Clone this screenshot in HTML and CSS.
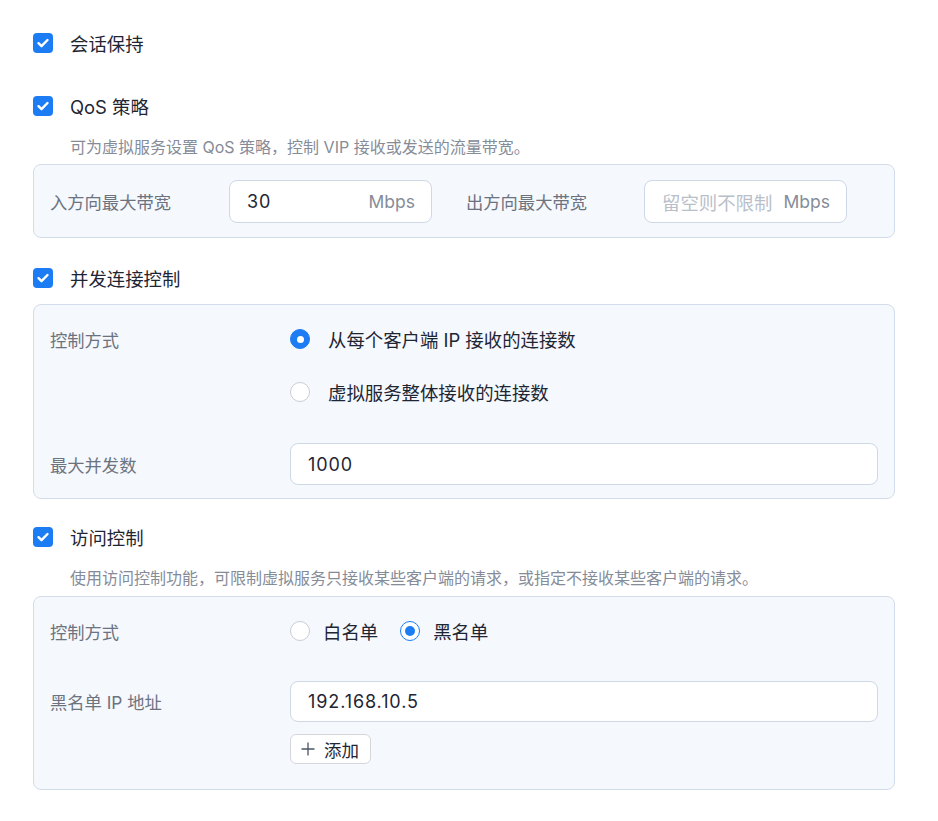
FILE: index.html
```html
<!DOCTYPE html>
<html lang="zh">
<head>
<meta charset="utf-8">
<link rel="stylesheet" href="styles.css">
</head>
<body>
<div class="page">
  <div class="check-row first">
    <span class="cb"><svg viewBox="0 0 20 20" width="20" height="20"><path d="M5.5 10.2l3 3 6-6.2" fill="none" stroke="#fff" stroke-width="2.4" stroke-linecap="round" stroke-linejoin="round"/></svg></span>
    <span class="cb-label">会话保持</span>
  </div>

  <div class="check-row r2">
    <span class="cb"><svg viewBox="0 0 20 20" width="20" height="20"><path d="M5.5 10.2l3 3 6-6.2" fill="none" stroke="#fff" stroke-width="2.4" stroke-linecap="round" stroke-linejoin="round"/></svg></span>
    <span class="cb-label">QoS 策略</span>
  </div>
  <div class="desc d1">可为虚拟服务设置 QoS 策略，控制 VIP 接收或发送的流量带宽。</div>
  <div class="box box-qos">
    <span class="lbl w179">入方向最大带宽</span>
    <div class="input unit-input"><span class="val">30</span><span class="unit">Mbps</span></div>
    <span class="lbl w178 ml34">出方向最大带宽</span>
    <div class="input unit-input"><span class="ph">留空则不限制</span><span class="unit">Mbps</span></div>
  </div>

  <div class="check-row r3">
    <span class="cb"><svg viewBox="0 0 20 20" width="20" height="20"><path d="M5.5 10.2l3 3 6-6.2" fill="none" stroke="#fff" stroke-width="2.4" stroke-linecap="round" stroke-linejoin="round"/></svg></span>
    <span class="cb-label">并发连接控制</span>
  </div>
  <div class="box box-conn">
    <div class="grid">
      <span class="lbl row36">控制方式</span>
      <div class="radios-col">
        <div class="radio-row"><span class="rd rd-fill"></span><span class="rd-text">从每个客户端 IP 接收的连接数</span></div>
        <div class="radio-row"><span class="rd"></span><span class="rd-text">虚拟服务整体接收的连接数</span></div>
      </div>
      <span class="lbl row42 mt33">最大并发数</span>
      <div class="input full mt33"><span class="val">1000</span></div>
    </div>
  </div>

  <div class="check-row r4">
    <span class="cb"><svg viewBox="0 0 20 20" width="20" height="20"><path d="M5.5 10.2l3 3 6-6.2" fill="none" stroke="#fff" stroke-width="2.4" stroke-linecap="round" stroke-linejoin="round"/></svg></span>
    <span class="cb-label">访问控制</span>
  </div>
  <div class="desc d2">使用访问控制功能，可限制虚拟服务只接收某些客户端的请求，或指定不接收某些客户端的请求。</div>
  <div class="box box-acl">
    <div class="grid">
      <span class="lbl row36">控制方式</span>
      <div class="radio-inline">
        <span class="rd"></span><span class="rd-text small-gap">白名单</span>
        <span class="rd rd-ring"></span><span class="rd-text small-gap">黑名单</span>
      </div>
      <span class="lbl row41 mt32">黑名单 IP 地址</span>
      <div class="mt32 ip-col">
        <div class="input full h41"><span class="val">192.168.10.5</span></div>
        <button class="add-btn"><svg viewBox="0 0 16 16" width="16" height="16"><path d="M8 1.5v13M1.5 8h13" stroke="#4b5563" stroke-width="1.3" fill="none"/></svg><span>添加</span></button>
      </div>
    </div>
  </div>
</div>
</body>
</html>
```

FILE: styles.css
```css
* { box-sizing: border-box; }
html, body { margin: 0; padding: 0; background: #fff; }
body {
  font-family: Inter, "Noto Sans CJK SC", sans-serif;
  color: #1f2633;
}
.page {
  width: 938px;
  padding: 29px 43px 30px 33px;
}
.check-row {
  display: flex;
  align-items: center;
  height: 28px;
}
.check-row.r2 { margin-top: 35px; }
.check-row.r3 { margin-top: 26px; }
.check-row.r4 { margin-top: 24px; }
.cb {
  width: 20px;
  height: 20px;
  border-radius: 4px;
  background: #1c7cf4;
  display: inline-flex;
  flex: none;
}
.cb-label {
  margin-left: 17px;
  font-size: 18.4px;
  color: #1f2633;
}
.desc {
  padding-left: 37px;
  font-family: Inter, "Noto Sans CJK SC", sans-serif;
  font-size: 16px;
  line-height: 20px;
  height: 20px;
  white-space: nowrap;
  color: #858c98;
}
.d1 { margin-top: 17px; }
.d2 { margin-top: 17px; }
.box {
  background: #f5f8fd;
  border: 1px solid #d3dcea;
  border-radius: 8px;
}
.box-qos {
  margin-top: 7px;
  padding: 15px 16px 14px;
  display: flex;
  align-items: center;
}
.lbl {
  font-size: 17.3px;
  color: #6c7380;
  display: flex;
  align-items: center;
}
.w179 { width: 179px; flex: none; }
.w178 { width: 178px; flex: none; }
.ml34 { margin-left: 34px; }
.input {
  background: #fff;
  border: 1px solid #cfd8e6;
  border-radius: 8px;
  height: 43px;
  display: flex;
  align-items: center;
  padding: 0 16px 0 17px;
  font-size: 18px;
}
.unit-input {
  width: 203px;
  flex: none;
  justify-content: space-between;
}
.val { color: #1f2633; letter-spacing: 0.9px; }
.unit { color: #858c98; font-size: 17.5px; }
.ph { color: #b9bfc9; font-size: 18.4px; }
.box-conn {
  margin-top: 12px;
  padding: 16px 16px 13px;
}
.grid {
  display: grid;
  grid-template-columns: 240px 1fr;
}
.row36 { height: 36px; align-self: start; }
.row42 { height: 42px; }
.row41 { height: 41px; align-self: start; }
.mt33 { margin-top: 33px; }
.mt32 { margin-top: 32px; }
.radios-col {
  display: flex;
  flex-direction: column;
  gap: 17px;
}
.radio-row {
  display: flex;
  align-items: center;
  height: 36px;
}
.rd {
  width: 20px;
  height: 20px;
  border-radius: 50%;
  border: 1px solid #c9ced6;
  background: #fff;
  flex: none;
  position: relative;
}
.rd-fill {
  background: #1c7cf4;
  border-color: #1c7cf4;
}
.rd-fill::after {
  content: "";
  position: absolute;
  left: 50%;
  top: 50%;
  width: 7px;
  height: 7px;
  margin: -3.5px 0 0 -3.5px;
  border-radius: 50%;
  background: #fff;
}
.rd-ring {
  border: 1.5px solid #1c7cf4;
}
.rd-ring::after {
  content: "";
  position: absolute;
  left: 50%;
  top: 50%;
  width: 10px;
  height: 10px;
  margin: -5px 0 0 -5px;
  border-radius: 50%;
  background: #1c7cf4;
}
.rd-text {
  margin-left: 18px;
  font-size: 18.4px;
  color: #1f2633;
}
.rd-text.small-gap { margin-left: 13px; margin-right: 22px; }
.full { height: 42px; }
.h41 { height: 41px; }
.box-acl {
  margin-top: 8px;
  padding: 16px 16px 25px;
}
.radio-inline {
  display: flex;
  align-items: center;
  height: 36px;
}
.ip-col {
  display: flex;
  flex-direction: column;
  align-items: flex-start;
}
.ip-col .input { width: 100%; }
.add-btn {
  margin-top: 12px;
  height: 30px;
  padding: 0 11px 0 9px;
  display: flex;
  align-items: center;
  gap: 8px;
  background: #fff;
  border: 1px solid #d4d6dc;
  border-radius: 6px;
  font-family: Inter, "Noto Sans CJK SC", sans-serif;
  font-size: 17.5px;
  color: #1f2633;
}
```
